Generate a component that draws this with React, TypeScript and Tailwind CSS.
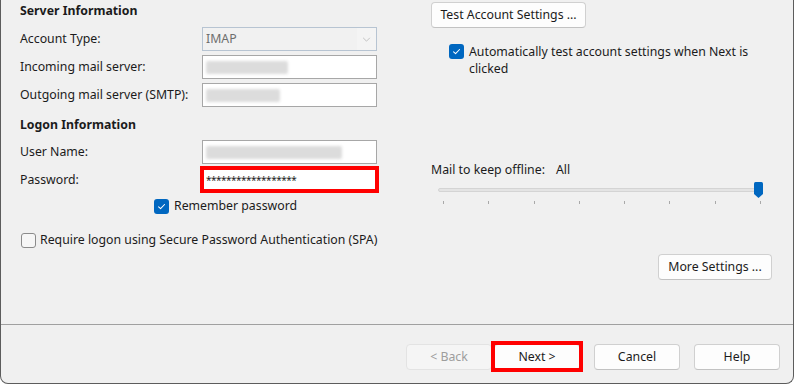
import React from "react";

function Check({ on }: { on: boolean }) {
  if (!on) {
    return <span className="block size-[15px] shrink-0 rounded-[3px] border border-[#8b8b8b] bg-[#f6f6f6]" />;
  }
  return (
    <span className="flex size-[15px] shrink-0 items-center justify-center rounded-[3px] bg-[#0067c0]">
      <svg viewBox="0 0 12 12" className="size-[11px]" fill="none" stroke="white" strokeWidth="1.1">
        <path d="M2.8 6.3L5 8.4L9.3 3.8" strokeLinecap="round" strokeLinejoin="round" />
      </svg>
    </span>
  );
}

function Btn({ label, disabled, className = "" }: { label: string; disabled?: boolean; className?: string }) {
  return (
    <div
      className={
        "flex h-[26px] items-center justify-center rounded-[4px] border " +
        (disabled
          ? "border-[#e3e3e3] bg-[#f5f5f5] text-[#9d9d9d] "
          : "border-[#d0d0d0] border-b-[#c2c2c2] bg-[#fdfdfd] text-[#1b1b1b] ") +
        className
      }
    >
      {label}
    </div>
  );
}

function Field({ blur }: { blur?: number }) {
  return (
    <div className="flex h-[24px] w-[175px] items-center border border-[#a7a7a7] bg-white px-[3px]">
      {blur ? (
        <div className="h-[13px] rounded-[2px] bg-[#dcdcdc] blur-[1.5px]" style={{ width: blur }} />
      ) : null}
    </div>
  );
}

const ticks = [0, 1, 2, 3, 4, 5, 6, 7];

export default function App() {
  return (
    <div className="h-[385px] w-[795px] bg-white text-[12.3px] text-[#1b1b1b]" style={{ fontFamily: '"Noto Sans", "Open Sans", sans-serif' }}>
      <div className="flex h-[384px] w-[794px] flex-col rounded-b-[8px] border-x border-b border-[#5c5c5c] bg-[#f0f0f0]">
        {/* main area */}
        <div className="flex h-[325px] border-b border-[#a0a0a0]">
          {/* left column */}
          <div className="flex w-[399px] flex-col pl-[19px] pt-[3px]">
            <div className="h-[16px] font-bold leading-[16px]">Server Information</div>
            <div className="mt-[8px] flex flex-col gap-[4px]">
              <div className="flex h-[24px] items-center">
                <span className="w-[182px]">Account Type:</span>
                <div className="flex h-[24px] w-[175px] items-center border border-[#b7c4d2] bg-[#f1f1f1] pl-[3px] text-[#6e6e6e]">
                  <span className="flex-1">IMAP</span>
                  <span className="flex h-full w-[19px] items-center justify-center bg-[#f4f4f4]">
                    <svg viewBox="0 0 10 6" className="h-[5px] w-[9px]" fill="none" stroke="#b8b8b8" strokeWidth="1">
                      <path d="M1 1L5 5L9 1" />
                    </svg>
                  </span>
                </div>
              </div>
              <div className="flex h-[24px] items-center">
                <span className="w-[182px]">Incoming mail server:</span>
                <Field blur={82} />
              </div>
              <div className="flex h-[24px] items-center">
                <span className="w-[182px]">Outgoing mail server (SMTP):</span>
                <Field blur={74} />
              </div>
            </div>
            <div className="mt-[10px] h-[16px] font-bold leading-[16px]">Logon Information</div>
            <div className="mt-[7px] flex flex-col gap-[4px]">
              <div className="flex h-[24px] items-center">
                <span className="w-[182px]">User Name:</span>
                <Field blur={136} />
              </div>
              <div className="flex h-[24px] items-center">
                <span className="w-[182px]">Password:</span>
                <div className="relative flex h-[24px] w-[175px] items-center border border-[#a7a7a7] bg-white px-[3px] text-[10px] leading-none tracking-[-0.5px]">
                  ******************
                  <div className="pointer-events-none absolute -inset-x-[3px] -top-[3px] -bottom-[2px] border-4 border-[#ff0000]" />
                </div>
              </div>
            </div>
            <div className="mt-[6px] flex h-[16px] items-center gap-[5px] pl-[134px]">
              <Check on />
              <span>Remember password</span>
            </div>
            <div className="mt-[18px] flex h-[16px] items-center gap-[4px] pl-[1px]">
              <Check on={false} />
              <span>Require logon using Secure Password Authentication (SPA)</span>
            </div>
          </div>

          {/* right column */}
          <div className="flex flex-1 flex-col pl-[31px] pr-[21px] pt-[2px]">
            <Btn label="Test Account Settings ..." className="h-[25px] w-[155px]" />
            <div className="mt-[15px] flex items-start gap-[5px] pl-[18px] leading-[17px]">
              <span className="mt-[1px]">
                <Check on />
              </span>
              <span className="w-[290px]">Automatically test account settings when Next is clicked</span>
            </div>
            <div className="mt-[85px] flex h-[16px] items-center gap-[11px] leading-[16px]">
              <span>Mail to keep offline:</span>
              <span>All</span>
            </div>
            {/* slider */}
            <div className="relative ml-[7px] mt-[4px] h-[26px] w-[326px]">
              <div className="absolute left-0 right-[4px] top-[6px] h-[4px] rounded-full border border-[#d4d4d4] bg-[#e4e4e4]" />
              <svg viewBox="0 0 9 16" className="absolute right-[1px] top-0 h-[16px] w-[9px]">
                <path d="M1.5 0H7.5Q9 0 9 1.5V12L4.5 16L0 12V1.5Q0 0 1.5 0Z" fill="#0067c0" />
              </svg>
              <div className="absolute inset-x-0 top-[19px] flex justify-between pl-[5px] pr-[3px]">
                {ticks.map((t) => (
                  <span key={t} className="block h-[3px] w-[1px] bg-[#a9a9a9]" />
                ))}
              </div>
            </div>
            <div className="mt-[46px] flex justify-end">
              <Btn label="More Settings ..." className="h-[25px] w-[114px]" />
            </div>
          </div>
        </div>

        {/* button bar */}
        <div className="flex justify-end pr-[13px] pt-[19px]">
          <Btn label="< Back" disabled className="w-[86px]" />
          <div className="relative ml-[2px]">
            <Btn label="Next >" className="w-[86px]" />
            <div className="pointer-events-none absolute -left-[3px] -right-[3px] -top-[3px] -bottom-[2px] border-4 border-[#ff0000]" />
          </div>
          <Btn label="Cancel" className="ml-[14px] w-[86px]" />
          <Btn label="Help" className="ml-[14px] w-[86px]" />
        </div>
      </div>
    </div>
  );
}
